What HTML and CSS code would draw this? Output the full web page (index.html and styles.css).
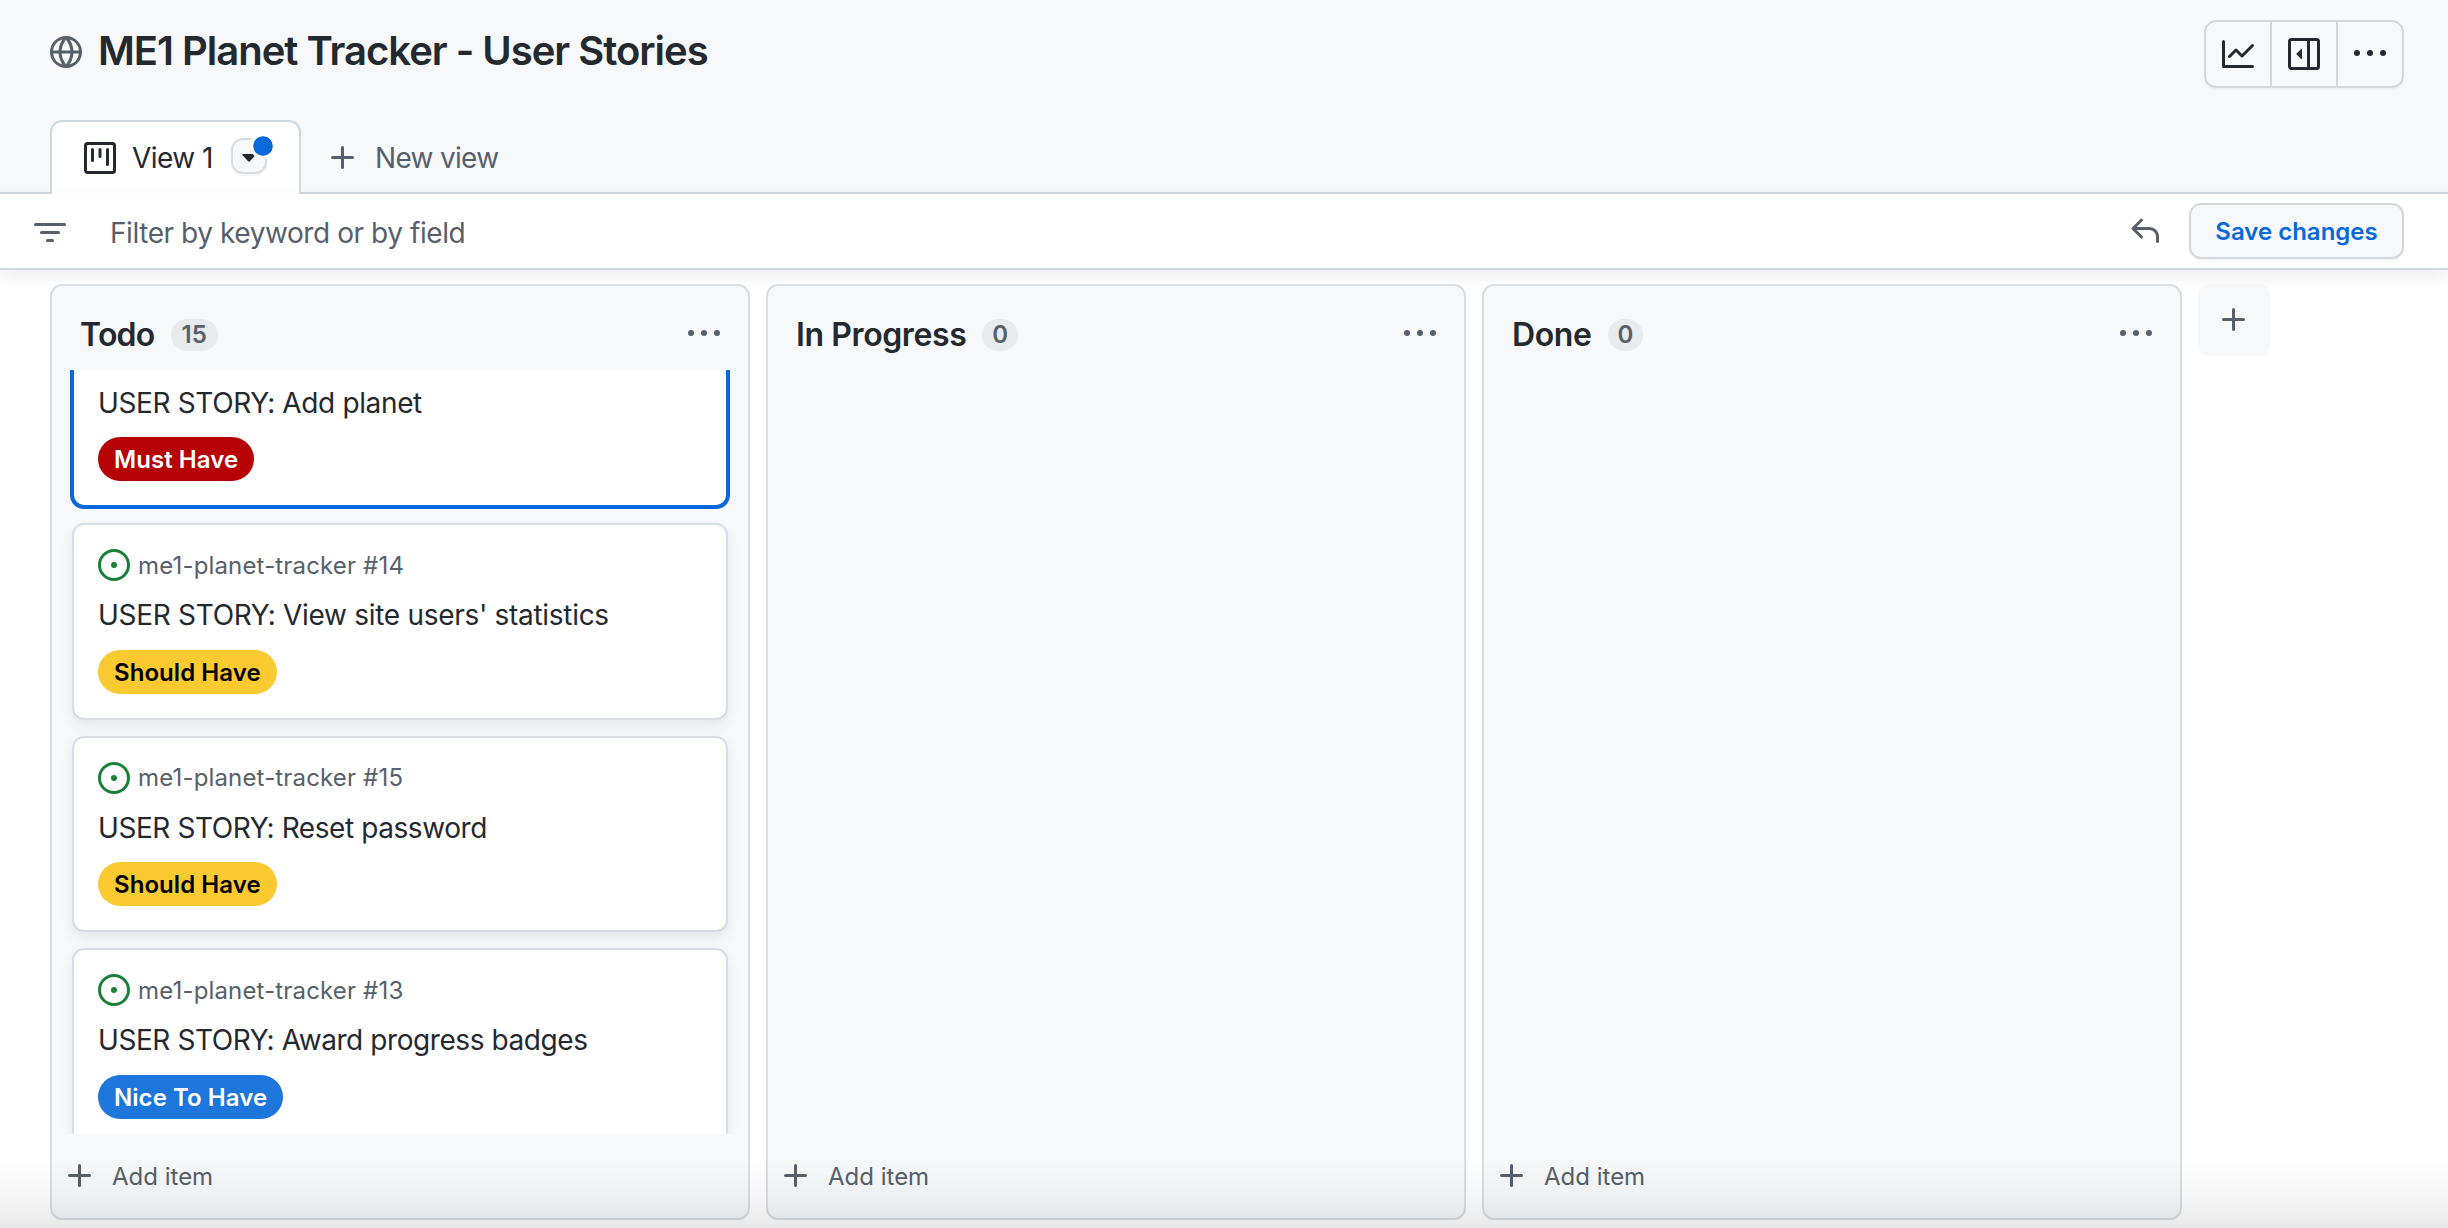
FILE: index.html
```html
<!DOCTYPE html>
<html lang="en">
<head>
<meta charset="utf-8">
<title>ME1 Planet Tracker - User Stories</title>
<link rel="stylesheet" href="styles.css">
</head>
<body>
<svg class="sprite" aria-hidden="true">
  <symbol id="dots" viewBox="0 0 16 16"><path d="M8 9a1.5 1.5 0 100-3 1.5 1.5 0 000 3zM1.5 9a1.5 1.5 0 100-3 1.5 1.5 0 000 3zm13 0a1.5 1.5 0 100-3 1.5 1.5 0 000 3z"/></symbol>
  <symbol id="plus" viewBox="0 0 16 16"><path d="M7.75 2a.75.75 0 01.75.75V7h4.25a.75.75 0 110 1.5H8.5v4.25a.75.75 0 11-1.5 0V8.5H2.75a.75.75 0 010-1.5H7V2.75A.75.75 0 017.75 2z"/></symbol>
  <symbol id="issue" viewBox="0 0 16 16"><path d="M8 9.5a1.5 1.5 0 100-3 1.5 1.5 0 000 3z"/><path fill-rule="evenodd" d="M8 0a8 8 0 100 16A8 8 0 008 0zM1.5 8a6.5 6.5 0 1113 0 6.5 6.5 0 01-13 0z"/></symbol>
</svg>
<header class="top">
  <div class="title-row">
    <svg class="icon muted globe" viewBox="0 0 16 16"><path fill-rule="evenodd" d="M1.543 7.25h2.733c.144-2.074.866-3.756 1.58-4.948.12-.197.237-.381.353-.552a6.506 6.506 0 00-4.666 5.5zm2.733 1.5H1.543a6.506 6.506 0 004.666 5.5 11.13 11.13 0 01-.352-.552c-.715-1.192-1.437-2.874-1.581-4.948zm1.504 0h4.44a9.637 9.637 0 01-1.363 4.177c-.306.51-.612.919-.857 1.215a9.978 9.978 0 01-.857-1.215A9.637 9.637 0 015.78 8.75zm4.44-1.5H5.78a9.637 9.637 0 011.363-4.177c.306-.51.612-.919.857-1.215.245.296.55.705.857 1.215A9.638 9.638 0 0110.22 7.25zm1.504 1.5c-.144 2.074-.866 3.756-1.58 4.948-.12.197-.237.381-.353.552a6.506 6.506 0 004.666-5.5h-2.733zm2.733-1.5h-2.733c-.144-2.074-.866-3.756-1.58-4.948a11.738 11.738 0 00-.353-.552 6.506 6.506 0 014.666 5.5zM8 0a8 8 0 100 16A8 8 0 008 0z"/></svg>
    <h1 class="title">ME1 Planet Tracker - User Stories</h1>
    <div class="button-group">
      <button class="group-btn"><svg class="icon" viewBox="0 0 16 16"><path fill-rule="evenodd" d="M1.5 1.75a.75.75 0 00-1.5 0v12.5c0 .414.336.75.75.75h14.5a.75.75 0 000-1.5H1.5V1.75zm14.28 2.53a.75.75 0 00-1.06-1.06L10 7.94 7.53 5.47a.75.75 0 00-1.06 0L3.22 8.72a.75.75 0 001.06 1.06L7 7.06l2.47 2.47a.75.75 0 001.06 0l5.25-5.25z"/></svg></button>
      <button class="group-btn"><svg class="icon" viewBox="0 0 16 16"><path fill-rule="evenodd" d="M1.75 0A1.75 1.75 0 000 1.75v12.5C0 15.216.784 16 1.75 16h12.5A1.75 1.75 0 0016 14.25V1.75A1.75 1.75 0 0014.25 0H1.75zM1.5 1.75a.25.25 0 01.25-.25H9.5v13H1.75a.25.25 0 01-.25-.25V1.75zM11 14.5v-13h3.25a.25.25 0 01.25.25v12.5a.25.25 0 01-.25.25H11z"/><path d="M7 5.8v4.4a.3.3 0 01-.52.2L4.3 8.2a.28.28 0 010-.4l2.18-2.2A.3.3 0 017 5.8z"/></svg></button>
      <button class="group-btn"><svg class="icon"><use href="#dots"/></svg></button>
    </div>
  </div>
  <nav class="tabs">
    <div class="tab">
      <svg class="icon" viewBox="0 0 16 16"><path fill-rule="evenodd" d="M1.75 0A1.75 1.75 0 000 1.75v12.5C0 15.216.784 16 1.75 16h12.5A1.75 1.75 0 0016 14.25V1.75A1.75 1.75 0 0014.25 0H1.75zM1.5 1.75a.25.25 0 01.25-.25h12.5a.25.25 0 01.25.25v12.5a.25.25 0 01-.25.25H1.75a.25.25 0 01-.25-.25V1.75zM11.75 3a.75.75 0 00-.75.75v7.5a.75.75 0 001.5 0v-7.5a.75.75 0 00-.75-.75zm-8.25.75a.75.75 0 011.5 0v5.5a.75.75 0 01-1.5 0v-5.5zM8 3a.75.75 0 00-.75.75v3.5a.75.75 0 001.5 0v-3.5A.75.75 0 008 3z"/></svg>
      <span class="tab-name">View 1</span>
      <button class="tab-menu"><svg class="caret" viewBox="0 0 12 7"><path d="M.8 0h10.4a.7.7 0 01.5 1.200L6.500 6.500a.7.7 0 01-1 0L.3 1.200A.7.7 0 01.8 0z"/></svg><i class="unsaved"></i></button>
    </div>
    <div class="new-view"><svg class="icon"><use href="#plus"/></svg><span>New view</span></div>
  </nav>
</header>
<section class="filter">
  <svg class="icon muted filter-icon" viewBox="0 0 16 16"><path d="M.75 3a.75.75 0 000 1.500h14.500a.75.75 0 000-1.500H.75zM3 7.750A.75.75 0 013.750 7h8.500a.75.75 0 010 1.500h-8.500A.75.75 0 013 7.750zm3 4a.75.75 0 01.75-.75h2.500a.75.75 0 010 1.500h-2.500a.75.75 0 01-.75-.75z"/></svg>
  <span class="filter-text">Filter by keyword or by field</span>
  <svg class="icon muted undo" viewBox="0 0 16 16"><path fill-rule="evenodd" d="M6.780 1.970a.75.75 0 010 1.060L3.810 6h6.440A4.750 4.750 0 0115 10.750v2.500a.75.75 0 01-1.500 0v-2.500a3.250 3.250 0 00-3.250-3.250H3.810l2.970 2.970a.75.75 0 11-1.060 1.060L1.470 7.280a.75.75 0 010-1.060l4.250-4.250a.75.75 0 011.060 0z"/></svg>
  <button class="save">Save changes</button>
</section>
<main class="board">
  <section class="column">
    <div class="column-head"><h2 class="tight">Todo</h2><span class="count">15</span><svg class="icon muted more"><use href="#dots"/></svg></div>
    <div class="cards">
      <article class="card selected">
        <div class="story">USER STORY: Add planet</div>
        <span class="label must">Must Have</span>
      </article>
      <article class="card">
        <div class="ref"><svg class="icon open"><use href="#issue"/></svg><span>me1-planet-tracker #14</span></div>
        <div class="story loose">USER STORY: View site users' statistics</div>
        <span class="label should">Should Have</span>
      </article>
      <article class="card">
        <div class="ref"><svg class="icon open"><use href="#issue"/></svg><span>me1-planet-tracker #15</span></div>
        <div class="story snug">USER STORY: Reset password</div>
        <span class="label should">Should Have</span>
      </article>
      <article class="card">
        <div class="ref"><svg class="icon open"><use href="#issue"/></svg><span>me1-planet-tracker #13</span></div>
        <div class="story snug">USER STORY: Award progress badges</div>
        <span class="label nice">Nice To Have</span>
      </article>
    </div>
    <div class="add-item"><svg class="icon"><use href="#plus"/></svg><span>Add item</span></div>
  </section>
  <section class="column">
    <div class="column-head"><h2>In Progress</h2><span class="count">0</span><svg class="icon muted more"><use href="#dots"/></svg></div>
    <div class="cards"></div>
    <div class="add-item"><svg class="icon"><use href="#plus"/></svg><span>Add item</span></div>
  </section>
  <section class="column">
    <div class="column-head"><h2>Done</h2><span class="count">0</span><svg class="icon muted more"><use href="#dots"/></svg></div>
    <div class="cards"></div>
    <div class="add-item"><svg class="icon"><use href="#plus"/></svg><span>Add item</span></div>
  </section>
  <button class="add-column"><svg class="icon"><use href="#plus"/></svg></button>
</main>
<div class="fade"></div>
</body>
</html>
```
FILE: styles.css
```css
* { box-sizing: border-box; }

body {
  margin: 0;
  height: 1228px;
  display: flex;
  flex-direction: column;
  overflow: hidden;
  position: relative;
  background: #fff;
  color: #24292f;
  font-family: Inter, "Liberation Sans", sans-serif;
  font-size: 28px;
}

button { font: inherit; color: inherit; padding: 0; }
h1, h2 { margin: 0; font-weight: 600; }
.sprite { display: none; }
.icon { width: 32px; height: 32px; flex: none; display: block; fill: currentColor; }
.muted { color: #57606a; }

.top {
  height: 194px;
  flex: none;
  display: flex;
  flex-direction: column;
  justify-content: space-between;
  background: #f6f8fa;
  box-shadow: inset 0 -2px #d0d7de;
}

.title-row {
  display: flex;
  align-items: flex-start;
  gap: 16px;
  padding: 20px 44px 0 50px;
}
.globe { margin-top: 16px; }
.title { flex: 1; font-size: 40px; line-height: 62px; letter-spacing: -1.02px; white-space: nowrap; }

.button-group {
  display: flex;
  height: 68px;
  border: 2px solid #d5d8da;
  border-radius: 12px;
  box-shadow: 0 2px 0 rgba(27, 31, 36, 0.04);
}
.group-btn {
  width: 66px;
  display: flex;
  align-items: center;
  justify-content: center;
  border: 0;
  background: none;
}
.group-btn + .group-btn { border-left: 2px solid #d5d8da; }
.group-btn:first-child { width: 64px; }

.tabs { display: flex; padding-left: 50px; letter-spacing: -0.55px; }
.tab {
  width: 251px;
  height: 74px;
  display: flex;
  align-items: center;
  padding-left: 32px;
  border: 2px solid #d0d7de;
  border-bottom: 0;
  border-radius: 12px 12px 0 0;
  background: #fff;
}
.tab-name { margin-left: 16px; width: 99px; white-space: nowrap; }
.tab-menu {
  position: relative;
  width: 36px;
  height: 36px;
  display: flex;
  align-items: center;
  justify-content: center;
  margin-top: -4px;
  border: 2px solid #d9dcde;
  border-radius: 12px;
  background: #f6f8fa;
  box-shadow: 0 2px 0 rgba(27, 31, 36, 0.04);
}
.caret { width: 14px; height: 8px; flex: none; fill: #24292f; margin-top: 3px; }
.unsaved {
  position: absolute;
  top: -7px;
  right: -11px;
  width: 26px;
  height: 26px;
  border: 3px solid #fff;
  border-radius: 50%;
  background: #0969da;
  background-clip: padding-box;
}
.new-view { display: flex; align-items: center; gap: 16px; margin-left: 26px; padding-top: 1px; color: #57606a; }
.new-view span { padding-top: 1px; letter-spacing: -0.7px; }

.filter {
  height: 76px;
  flex: none;
  display: flex;
  align-items: center;
  padding: 0 44px 0 34px;
  border-bottom: 2px solid #d0d7de;
  background: #fff;
  box-shadow: 0 6px 16px rgba(27, 31, 60, 0.08);
}
.filter-icon { margin-top: 3px; }
.filter-text { flex: 1; margin-left: 44px; padding-top: 3px; letter-spacing: -0.43px; color: #57606a; }
.undo { margin-right: 28px; }
.save {
  width: 215px;
  height: 56px;
  border: 2px solid #d5d8da;
  border-radius: 12px;
  background: #f6f8fa;
  box-shadow: 0 2px 0 rgba(27, 31, 36, 0.04);
  color: #0969da;
  font-size: 24px;
  font-weight: 600;
}

.board {
  flex: 1;
  min-height: 0;
  display: flex;
  align-items: flex-start;
  gap: 16px;
  padding: 14px 0 8px 50px;
}
.column {
  width: 700px;
  height: 936px;
  display: flex;
  flex-direction: column;
  border: 2px solid #d8dee4;
  border-radius: 12px;
  background: #f6f8fa;
}
.column-head { height: 84px; flex: none; display: flex; align-items: center; padding: 14px 28px 0; }
.column-head h2 { font-size: 32px; line-height: 48px; letter-spacing: -0.4px; white-space: nowrap; }
.column-head .tight { letter-spacing: -0.75px; }
.count {
  margin-left: 16px;
  height: 32px;
  padding: 0 10px;
  border-radius: 16px;
  background: #e7ebee;
  color: #57606a;
  font-size: 24px;
  font-weight: 600;
  line-height: 32px;
}
.tight + .count { padding: 0 11px; }
.more { margin-left: auto; margin-bottom: 2px; }

.cards {
  height: 764px;
  flex: none;
  display: flex;
  flex-direction: column;
  gap: 16px;
  padding: 0 20px;
  overflow: hidden;
}
.card {
  flex: none;
  height: 196.5px;
  padding: 24px;
  border: 2px solid #d8dee4;
  border-radius: 12px;
  background: #fff;
  box-shadow: 0 6px 12px rgba(140, 149, 159, 0.15);
}
.card.selected {
  height: 137px;
  padding-top: 0;
  border-color: #0969da;
  border-top: 0;
  border-radius: 0 0 12px 12px;
  box-shadow: 0 0 0 2px #0969da;
}
.ref { display: flex; align-items: center; gap: 8px; height: 32px; color: #57606a; font-size: 24px; letter-spacing: 0.16px; }
.open { color: #1a7f37; }
.story { height: 68.5px; padding-top: 13px; line-height: 42px; letter-spacing: -0.36px; white-space: nowrap; }
.story.loose { letter-spacing: -0.3px; }
.story.snug { letter-spacing: -0.42px; }
.selected .story { height: 67px; padding-top: 12px; }
.label {
  display: inline-block;
  height: 44px;
  padding: 0 16px;
  border-radius: 22px;
  font-size: 24px;
  font-weight: 600;
  letter-spacing: 0.06px;
  line-height: 45px;
  white-space: nowrap;
}
.must { background: #b60205; color: #fff; }
.should { background: #fbca30; color: #000; }
.nice { background: #1d76db; color: #fff; }

.add-item {
  flex: 1;
  display: flex;
  align-items: center;
  gap: 16px;
  padding-left: 12px;
  color: #57606a;
  font-size: 24px;
}
.add-column {
  width: 72px;
  height: 72px;
  display: flex;
  align-items: center;
  justify-content: center;
  border: 0;
  border-radius: 12px;
  background: #f6f8fa;
  color: #57606a;
}

.fade {
  position: absolute;
  left: 0;
  right: 0;
  bottom: 0;
  height: 70px;
  background: linear-gradient(rgba(0, 0, 0, 0), rgba(0, 0, 0, 0.03) 50%, rgba(0, 0, 0, 0.09));
  pointer-events: none;
}
```
